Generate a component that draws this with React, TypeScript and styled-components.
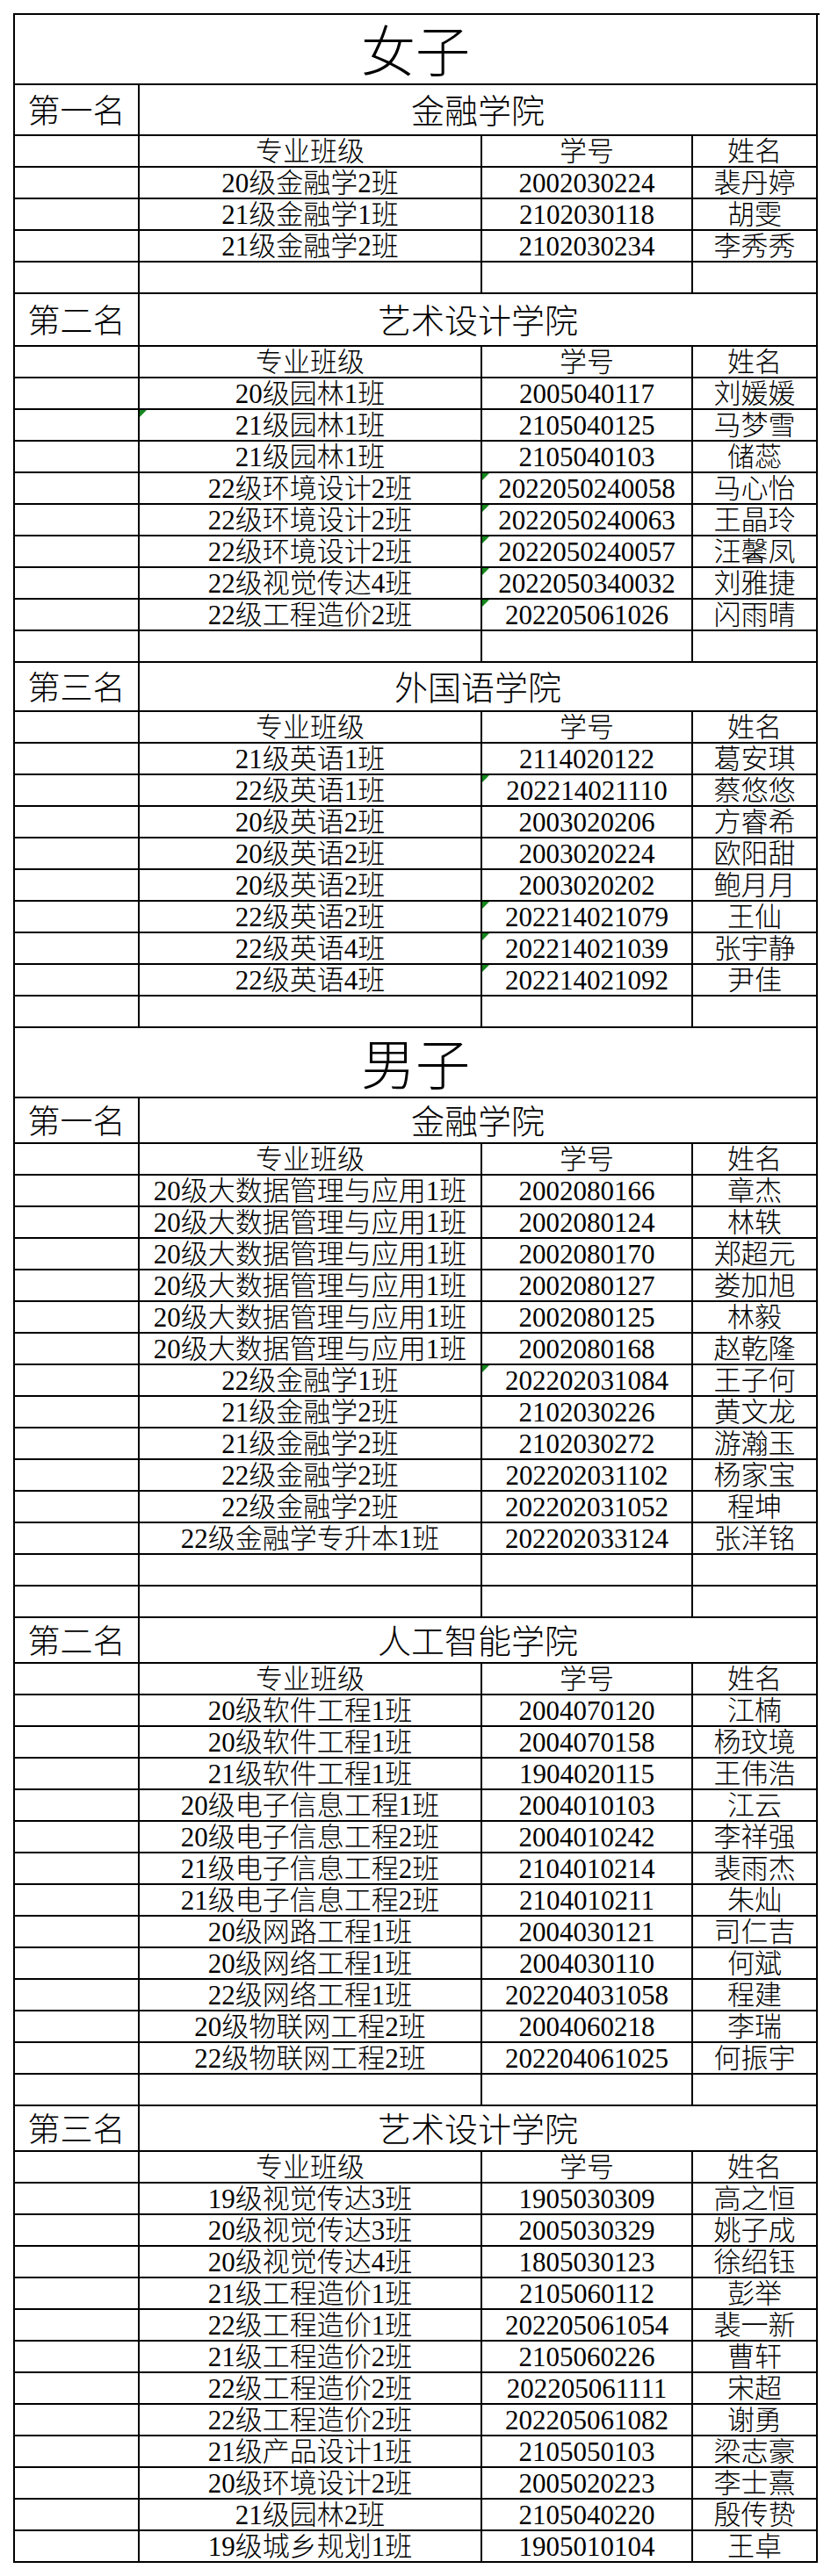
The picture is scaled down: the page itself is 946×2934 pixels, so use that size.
import React from 'react';
import styled, {createGlobalStyle, css} from 'styled-components';

const GlobalStyle = createGlobalStyle`
  html, body {
    margin: 0;
    padding: 0;
    background: #fff;
  }
  body {
    font-family: "Liberation Serif", "Noto Sans CJK SC", serif;
    color: #000;
  }
`

const LINE = '2px solid #000';

const Sheet = styled.div`
  width: 916px;
  margin: 15px 0 0 15px;
  border-left: ${LINE};
  border-top: ${LINE};
`

const Row = styled.div<{ $h: number }>`
  display: grid;
  grid-template-columns: 142px 390px 240px 142px;
  height: ${p => p.$h}px;
`

const Cell = styled.div<{ $span?: string; $flag?: boolean; $size: number; $pad: number }>`
  position: relative;
  box-sizing: border-box;
  display: flex;
  justify-content: center;
  align-items: flex-end;
  border-right: ${LINE};
  border-bottom: ${LINE};
  padding-bottom: ${p => p.$pad}px;
  font-size: ${p => p.$size}px;
  font-weight: 300;
  line-height: 1;
  white-space: nowrap;
  overflow: hidden;
  ${p => p.$span && css`grid-column: ${p.$span};`}
  ${p => p.$flag && css`
    &::before {
      content: '';
      position: absolute;
      top: 0;
      left: 0;
      border-top: 8px solid #14871c;
      border-right: 8px solid transparent;
    }
  `}
`

type Entry = [string, string, string, number?];

type Group = {
    rank: string;
    college: string;
    rankH: number;
    rows: Entry[];
    blanks: number;
};

type Section = { title: string; groups: Group[] };

const BIG = '20级大数据管理与应用1班';

const sections: Section[] = [
    {
        title: '女子',
        groups: [
            {
                rank: '第一名', college: '金融学院', rankH: 58, blanks: 1,
                rows: [
                    ['20级金融学2班', '2002030224', '裴丹婷'],
                    ['21级金融学1班', '2102030118', '胡雯'],
                    ['21级金融学2班', '2102030234', '李秀秀'],
                ],
            },
            {
                rank: '第二名', college: '艺术设计学院', rankH: 60, blanks: 1,
                rows: [
                    ['20级园林1班', '2005040117', '刘媛媛'],
                    ['21级园林1班', '2105040125', '马梦雪', 1],
                    ['21级园林1班', '2105040103', '储蕊'],
                    ['22级环境设计2班', '2022050240058', '马心怡', 2],
                    ['22级环境设计2班', '2022050240063', '王晶玲', 2],
                    ['22级环境设计2班', '2022050240057', '汪馨凤', 2],
                    ['22级视觉传达4班', '2022050340032', '刘雅捷', 2],
                    ['22级工程造价2班', '202205061026', '闪雨晴', 2],
                ],
            },
            {
                rank: '第三名', college: '外国语学院', rankH: 56, blanks: 1,
                rows: [
                    ['21级英语1班', '2114020122', '葛安琪'],
                    ['22级英语1班', '202214021110', '蔡悠悠', 2],
                    ['20级英语2班', '2003020206', '方睿希'],
                    ['20级英语2班', '2003020224', '欧阳甜'],
                    ['20级英语2班', '2003020202', '鲍月月'],
                    ['22级英语2班', '202214021079', '王仙', 2],
                    ['22级英语4班', '202214021039', '张宇静', 2],
                    ['22级英语4班', '202214021092', '尹佳', 2],
                ],
            },
        ],
    },
    {
        title: '男子',
        groups: [
            {
                rank: '第一名', college: '金融学院', rankH: 52, blanks: 2,
                rows: [
                    [BIG, '2002080166', '章杰'],
                    [BIG, '2002080124', '林轶'],
                    [BIG, '2002080170', '郑超元'],
                    [BIG, '2002080127', '娄加旭'],
                    [BIG, '2002080125', '林毅'],
                    [BIG, '2002080168', '赵乾隆'],
                    ['22级金融学1班', '202202031084', '王子何', 2],
                    ['21级金融学2班', '2102030226', '黄文龙'],
                    ['21级金融学2班', '2102030272', '游瀚玉'],
                    ['22级金融学2班', '202202031102', '杨家宝'],
                    ['22级金融学2班', '202202031052', '程坤'],
                    ['22级金融学专升本1班', '202202033124', '张洋铭'],
                ],
            },
            {
                rank: '第二名', college: '人工智能学院', rankH: 52, blanks: 1,
                rows: [
                    ['20级软件工程1班', '2004070120', '江楠'],
                    ['20级软件工程1班', '2004070158', '杨玟境'],
                    ['21级软件工程1班', '1904020115', '王伟浩'],
                    ['20级电子信息工程1班', '2004010103', '江云'],
                    ['20级电子信息工程2班', '2004010242', '李祥强'],
                    ['21级电子信息工程2班', '2104010214', '裴雨杰'],
                    ['21级电子信息工程2班', '2104010211', '朱灿'],
                    ['20级网路工程1班', '2004030121', '司仁吉'],
                    ['20级网络工程1班', '2004030110', '何斌'],
                    ['22级网络工程1班', '202204031058', '程建'],
                    ['20级物联网工程2班', '2004060218', '李瑞'],
                    ['22级物联网工程2班', '202204061025', '何振宇'],
                ],
            },
            {
                rank: '第三名', college: '艺术设计学院', rankH: 52, blanks: 0,
                rows: [
                    ['19级视觉传达3班', '1905030309', '高之恒'],
                    ['20级视觉传达3班', '2005030329', '姚子成'],
                    ['20级视觉传达4班', '1805030123', '徐绍钰'],
                    ['21级工程造价1班', '2105060112', '彭举'],
                    ['22级工程造价1班', '202205061054', '裴一新'],
                    ['21级工程造价2班', '2105060226', '曹轩'],
                    ['22级工程造价2班', '202205061111', '宋超'],
                    ['22级工程造价2班', '202205061082', '谢勇'],
                    ['21级产品设计1班', '2105050103', '梁志豪'],
                    ['20级环境设计2班', '2005020223', '李士熹'],
                    ['21级园林2班', '2105040220', '殷传贽'],
                    ['19级城乡规划1班', '1905010104', '王卓'],
                ],
            },
        ],
    },
];

const DATA = 31;
const DATA_PAD = 1;

const DataRow = ({row}: { row: Entry }) => (
    <Row $h={36}>
        <Cell $size={DATA} $pad={DATA_PAD}/>
        <Cell $size={DATA} $pad={DATA_PAD} $flag={row[3] === 1}>{row[0]}</Cell>
        <Cell $size={DATA} $pad={DATA_PAD} $flag={row[3] === 2}>{row[1]}</Cell>
        <Cell $size={DATA} $pad={DATA_PAD}>{row[2]}</Cell>
    </Row>
);

const GroupBlock = ({group}: { group: Group }) => {
    const pad = Math.round((group.rankH - 44) / 2);
    return (
        <>
            <Row $h={group.rankH}>
                <Cell $size={37} $pad={pad}>{group.rank}</Cell>
                <Cell $size={38} $pad={pad} $span="2 / 5">{group.college}</Cell>
            </Row>
            <DataRow row={['专业班级', '学号', '姓名']}/>
            {group.rows.map((r, i) => <DataRow key={i} row={r}/>)}
            {Array.from({length: group.blanks}).map((_, i) => <DataRow key={'b' + i} row={['', '', '']}/>)}
        </>
    );
};

const App = () => {
    return (
        <>
            <GlobalStyle/>
            <Sheet>
                {sections.map(s => (
                    <React.Fragment key={s.title}>
                        <Row $h={80}>
                            <Cell $size={62} $pad={3} $span="1 / 5">{s.title}</Cell>
                        </Row>
                        {s.groups.map(g => <GroupBlock key={s.title + g.rank} group={g}/>)}
                    </React.Fragment>
                ))}
            </Sheet>
        </>
    );
};

export default App;
